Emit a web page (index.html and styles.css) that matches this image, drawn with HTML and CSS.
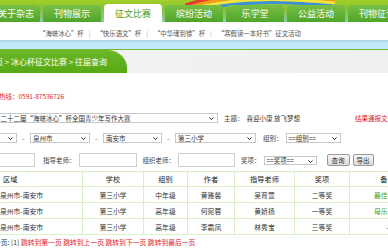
FILE: index.html
```html
<!DOCTYPE html>
<html lang="zh-CN">
  <head>
    <meta charset="UTF-8" />
    <title>往届查询</title>
    <link rel="stylesheet" href="styles.css">
  </head>
  <body>
    <div class="header">
      <svg class="rainbow" width="150" height="10" viewBox="0 0 150 10">
        <path d="M0 14 Q55 -4 150 6" stroke="#3d8fd8" stroke-width="3" fill="none"/>
        <path d="M0 11 Q55 -7 150 3" stroke="#f2e43c" stroke-width="3" fill="none"/>
        <path d="M0 8 Q55 -10 150 0" stroke="#f39a1e" stroke-width="3" fill="none"/>
        <path d="M0 5 Q55 -13 150 -3" stroke="#e63b2e" stroke-width="3" fill="none"/>
      </svg>
      <ul class="tabs">
        <li class="first">关于杂志</li>
        <li>刊物展示</li>
        <li class="on">征文比赛</li>
        <li>缤纷活动</li>
        <li>乐学堂</li>
        <li>公益活动</li>
        <li>刊物征订</li>
      </ul>
    </div>
    <div class="subnav">
      <a>“海峡冰心”杯</a><span class="sep">|</span>
      <a>“快乐语文”杯</a><span class="sep">|</span>
      <a>“中华魂到徐”杯</a><span class="sep">|</span>
      <a>“寒假读一本好书”征文活动</a>
    </div>
    <div class="band"></div>
    <div class="crumb">
      <div class="crumb-green">首页 &gt; 冰心杯征文比赛 &gt; 往届查询</div>
    </div>
    <div class="content">
      <p class="hotline">咨询热线：0591-87536726</p>
      <div class="row row1">
        <span class="select w227">第二十二届“海峡冰心”杯全国青少年写作大赛<svg viewBox="0 0 6 4"><path d="M0.5 0.5 L3 3 L5.5 0.5" /></svg></span>
        <span class="label l6">主题：</span>
        <span>喜迎小康 放飞梦想</span>
        <span class="red">结果通报文件</span>
      </div>
      <div class="row row2">
        <span class="select w55">福建省<svg viewBox="0 0 6 4"><path d="M0.5 0.5 L3 3 L5.5 0.5" /></svg></span>
        <span class="dash">-</span>
        <span class="select w60">泉州市<svg viewBox="0 0 6 4"><path d="M0.5 0.5 L3 3 L5.5 0.5" /></svg></span>
        <span class="dash">-</span>
        <span class="select w59">南安市<svg viewBox="0 0 6 4"><path d="M0.5 0.5 L3 3 L5.5 0.5" /></svg></span>
        <span class="dash">-</span>
        <span class="select w81">第三小学<svg viewBox="0 0 6 4"><path d="M0.5 0.5 L3 3 L5.5 0.5" /></svg></span>
        <span class="label l7">组别：</span>
        <span class="select w55">==组别==<svg viewBox="0 0 6 4"><path d="M0.5 0.5 L3 3 L5.5 0.5" /></svg></span>
      </div>
      <div class="row row3">
        <span class="input w58"></span>
        <span class="label l8">指导老师：</span>
        <span class="input w58"></span>
        <span class="label l6">组织老师：</span>
        <span class="input w57"></span>
        <span class="label l6">奖项：</span>
        <span class="select w53 short">==奖项==<svg viewBox="0 0 6 4"><path d="M0.5 0.5 L3 3 L5.5 0.5" /></svg></span>
        <button class="btn">查询</button>
        <button class="btn">导出</button>
      </div>
      <table class="list">
        <tr>
          <th class="area">区域</th>
          <th>学校</th>
          <th>组别</th>
          <th>作者</th>
          <th>指导老师</th>
          <th>奖项</th>
          <th>备注</th>
        </tr>
        <tr>
          <td>泉州市-南安市</td>
          <td>第三小学</td>
          <td>中年级</td>
          <td>黄雅馨</td>
          <td>吴育萱</td>
          <td>二等奖</td>
          <td class="green">最佳创意</td>
        </tr>
        <tr>
          <td>泉州市-南安市</td>
          <td>第三小学</td>
          <td>高年级</td>
          <td>何宛蓉</td>
          <td>黄娇扬</td>
          <td>一等奖</td>
          <td class="green">母乐之星</td>
        </tr>
        <tr>
          <td>泉州市-南安市</td>
          <td>第三小学</td>
          <td>高年级</td>
          <td>李霜凤</td>
          <td>林秀宝</td>
          <td>三等奖</td>
          <td>-</td>
        </tr>
      </table>
      <p class="pager">分页: [1] <a>跳转到第一页</a> <a>跳转到上一页</a> <a>跳转到下一页</a> <a>跳转到最后一页</a></p>
    </div>
  </body>
</html>
```

FILE: styles.css
```css
*{
    margin: 0;
    padding: 0;
    box-sizing: border-box;
}
body{
    width: 388px;
    overflow: hidden;
    background: #fff;
    font-family: "Noto Sans CJK SC", "Noto Sans", sans-serif;
    color: #333;
}
.header{
    position: relative;
    height: 22px;
    overflow: hidden;
    background: linear-gradient(#a3cf26, #86c13a 45%, #8fcab0);
}
.rainbow{
    position: absolute;
    top: 0;
    left: 185px;
}
.tabs{
    position: relative;
    display: flex;
    align-items: flex-end;
    gap: 3px;
    height: 22px;
    margin-left: -8px;
    list-style: none;
}
.tabs li{
    flex: none;
    width: 58px;
    height: 17px;
    line-height: 17px;
    text-align: center;
    font-size: 9px;
    color: #fff;
    background: linear-gradient(#79bf45, #4fa528);
    border-radius: 4px 4px 0 0;
}
.tabs li.first{
    width: 48px;
}
.tabs li.on{
    height: 18px;
    line-height: 19px;
    color: #4c9b26;
    background: #fff;
}
.subnav{
    display: flex;
    align-items: center;
    height: 18px;
    padding: 4px 0 0 39px;
    font-size: 6.4px;
    color: #555;
    white-space: nowrap;
}
.subnav .sep{
    margin: 0 6px 0 5px;
    color: #aaa;
}
.band{
    height: 10px;
    background: linear-gradient(#a4d2e6, #c2eafb 35%);
    border-bottom: 1px solid #72b93a;
}
.crumb{
    display: flex;
    height: 23px;
    background: linear-gradient(90deg, #f3f3f3, #efefef);
}
.crumb-green{
    width: 140px;
    margin-left: -13px;
    line-height: 23px;
    font-size: 8px;
    color: #fff;
    white-space: nowrap;
    background: linear-gradient(#6bb82a, #58a814);
    border-top-right-radius: 20px 18px;
}
.content{
    width: 470px;
    margin-left: -40px;
    font-size: 6.5px;
    white-space: nowrap;
}
.hotline{
    height: 10px;
    margin-top: 18px;
    padding-left: 26px;
    line-height: 10px;
    color: #e3222a;
}
.row{
    display: flex;
    align-items: center;
}
.row1{
    height: 10px;
    margin-top: 12px;
    padding-left: 31px;
}
.row2{
    height: 10px;
    margin-top: 10px;
    padding-left: 2px;
}
.row3{
    height: 14px;
    margin-top: 10px;
    padding-left: 17px;
}
.select{
    position: relative;
    display: flex;
    align-items: center;
    height: 10px;
    padding-left: 2px;
    border: 1px solid #c8c8c8;
    background: #fff;
}
.select svg{
    position: absolute;
    right: 3px;
    top: 3px;
    width: 5px;
    height: 3.5px;
}
.select path{
    fill: none;
    stroke: #222;
    stroke-width: 1.2;
}
.select.short{
    height: 9px;
}
.input{
    height: 14px;
    border: 1px solid #cfcfcf;
    background: #fff;
}
.w227{ width: 227px; }
.w81{ width: 81px; }
.w60{ width: 60px; }
.w59{ width: 59px; }
.w58{ width: 58px; }
.w57{ width: 57px; }
.w55{ width: 55px; }
.w53{ width: 53px; }
.dash{
    width: 13px;
    text-align: center;
}
.label{
    margin-right: 3px;
    color: #444;
}
.l6{ margin-left: 6px; }
.l7{ margin-left: 7px; }
.l8{ margin-left: 8px; }
.red{
    margin-left: 55px;
    color: #e3222a;
}
.btn{
    height: 12px;
    width: 23px;
    margin-left: 10px;
    font-family: inherit;
    font-size: 6.5px;
    color: #333;
    border: 1px solid #999;
    border-radius: 2px;
    background: linear-gradient(#f7f7f7, #dcdcdc);
}
.btn + .btn{
    margin-left: 3px;
    width: 21px;
}
.list{
    margin-top: 4px;
    border-collapse: collapse;
    font-size: 6.8px;
}
.list th,
.list td{
    height: 16px;
    padding: 0;
    text-align: center;
    font-weight: normal;
    border: 1px solid #d9efc8;
}
.list th{
    height: 15px;
    font-size: 7.2px;
    color: #222;
}
.list th.area{
    text-align: left;
    padding-left: 42px;
}
.list tr > :nth-child(1){ width: 122px; }
.list tr > :nth-child(2){ width: 61px; }
.list tr > :nth-child(3){ width: 44px; }
.list tr > :nth-child(4){ width: 47px; }
.list tr > :nth-child(5){ width: 60px; }
.list tr > :nth-child(6){ width: 55px; }
.list tr > :nth-child(7){ width: 76px; }
.list .green{
    color: #3aa12a;
}
.pager{
    margin-top: 2px;
    padding-left: 34px;
    font-size: 6.8px;
    line-height: 10px;
}
.pager a{
    color: #e3222a;
}
```
